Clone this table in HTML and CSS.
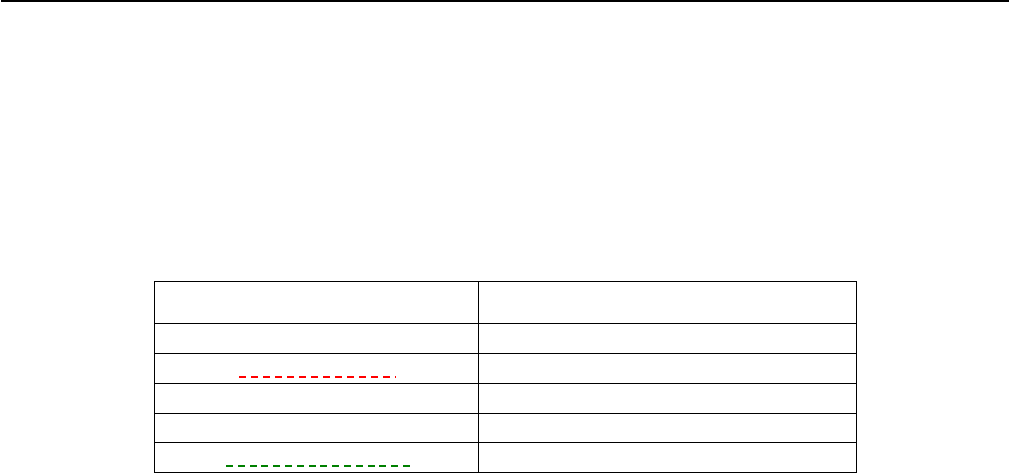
FILE: index.html
```html
<!DOCTYPE html>
<html lang="en">
<head>
    <meta charset="UTF-8">
    <meta name="viewport" content="width=device-width, initial-scale=1.0">
    <link rel="stylesheet" href="styles.css">
    <title>Form</title>
</head>
<body>
    <div class="top-rule"></div>

    <table class="form-table">
        <tr class="head-row">
            <td class="col-left"></td>
            <td class="col-right"></td>
        </tr>
        <tr><td></td><td></td></tr>
        <tr>
            <td class="blank-cell"><span class="blank blank-red"></span></td>
            <td></td>
        </tr>
        <tr><td></td><td></td></tr>
        <tr class="short-row"><td></td><td></td></tr>
        <tr>
            <td class="blank-cell"><span class="blank blank-green"></span></td>
            <td></td>
        </tr>
    </table>
</body>
</html>
```

FILE: styles.css
```css
*, body{
    box-sizing: border-box;
    margin: 0;
}
body{
    font-family: "Liberation Sans", Arial, sans-serif;
    background: #fff;
}

.top-rule{
    height: 2px;
    margin: 0 1px;
    background: #000;
}

.form-table{
    border-collapse: collapse;
    width: 703px;
    margin: 279px 0 0 154px;
}
.form-table td{
    border: 1px solid #000;
    height: 30px;
    padding: 0;
}
.form-table .head-row td{
    height: 42px;
}
.form-table .short-row td{
    height: 29px;
}
.col-left{
    width: 324px;
}

/* dashed blanks to fill in */
.blank-cell{
    text-align: center;
    vertical-align: bottom;
    padding-bottom: 5px !important;
    line-height: 0;
}
.blank{
    display: inline-block;
    height: 2px;
}
.blank-red{
    width: 157px;
    margin-left: 2px;
    background: repeating-linear-gradient(to right, #f00 0 7px, transparent 7px 12px);
}
.blank-green{
    width: 184px;
    margin-left: 2px;
    background: repeating-linear-gradient(to right, #008000 0 7px, transparent 7px 11.8px);
}
```
